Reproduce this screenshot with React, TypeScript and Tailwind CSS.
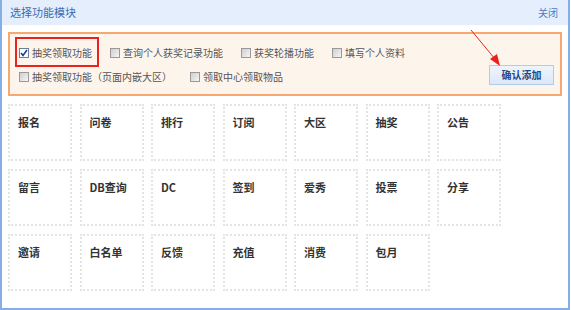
import React from "react";

const row1 = ["抽奖领取功能", "查询个人获奖记录功能", "获奖轮播功能", "填写个人资料"];
const row2 = ["抽奖领取功能（页面内嵌大区）", "领取中心领取物品"];

const modules = [
  "报名", "问卷", "排行", "订阅", "大区", "抽奖", "公告",
  "留言", "DB查询", "DC", "签到", "爱秀", "投票", "分享",
  "邀请", "白名单", "反馈", "充值", "消费", "包月",
];

function Check({ label, checked }: { label: string; checked?: boolean }) {
  return (
    <div className="flex items-center gap-[3px] h-[16px]">
      {checked ? (
        <span className="w-[10px] h-[10px] border border-[#6d7f99] bg-white flex items-center justify-center">
          <svg width="8" height="8" viewBox="0 0 8 8">
            <path d="M1 4 L3 6.5 L7 1" stroke="#1c3f94" strokeWidth="1.6" fill="none" />
          </svg>
        </span>
      ) : (
        <span className="w-[10px] h-[10px] border border-[#999] bg-gradient-to-br from-[#cfcfcf] to-[#f5f5f5]" />
      )}
      <span className="text-[10px] leading-[16px] text-[#555] whitespace-nowrap">{label}</span>
    </div>
  );
}

export default function App() {
  return (
    <div className="w-[570px] h-[310px] border-x-2 border-b-2 border-[#86aee6] bg-white relative font-['Noto_Sans_CJK_SC',sans-serif]">
      {/* 标题栏 */}
      <div className="h-[25px] bg-[#e4eefc] flex items-center justify-between pl-[8px] pr-[10px]">
        <span className="text-[11px] text-[#3a6db5]">选择功能模块</span>
        <span className="text-[10px] text-[#4a7cc4]">关闭</span>
      </div>

      {/* 功能选项 */}
      <div className="mt-[7px] mx-[6px] h-[64px] border-2 border-[#f6a870] bg-[#fdf4ec] flex justify-between items-end pl-[9px] pr-[6px] pb-[9px]">
        <div className="self-start pt-[11px] flex flex-col gap-[8px]">
          <div className="flex gap-[18px]">
            {row1.map((l, i) => (
              <Check key={l} label={l} checked={i === 0} />
            ))}
          </div>
          <div className="flex gap-[18px]">
            {row2.map((l) => (
              <Check key={l} label={l} />
            ))}
          </div>
        </div>
        <button className="w-[65px] h-[20px] border border-[#b3cbea] bg-gradient-to-b from-[#eef4fd] to-[#dce8f8] text-[10px] font-bold text-[#1f4a86] leading-none">
          确认添加
        </button>
      </div>

      {/* 模块列表 */}
      <div className="mt-[8px] ml-[6px] grid grid-cols-[repeat(7,64px)] gap-x-[7.5px] gap-y-[8px]">
        {modules.map((m) => (
          <div
            key={m}
            className="h-[57px] border-2 border-dotted border-[#e4e4e4] pl-[8px] pt-[9px] text-[11px] leading-[14px] font-semibold text-[#333]"
          >
            {m}
          </div>
        ))}
      </div>

      {/* 标注 */}
      <div className="absolute left-[13px] top-[37px] w-[84px] h-[30px] border-2 border-[#e8231f]" />
      <svg className="absolute left-0 top-0 pointer-events-none" width="570" height="310">
        <line x1="469" y1="30" x2="493" y2="59" stroke="#e8231f" strokeWidth="1" />
        <polygon points="498,66 488,59 495,54" fill="#e8231f" />
      </svg>
    </div>
  );
}
